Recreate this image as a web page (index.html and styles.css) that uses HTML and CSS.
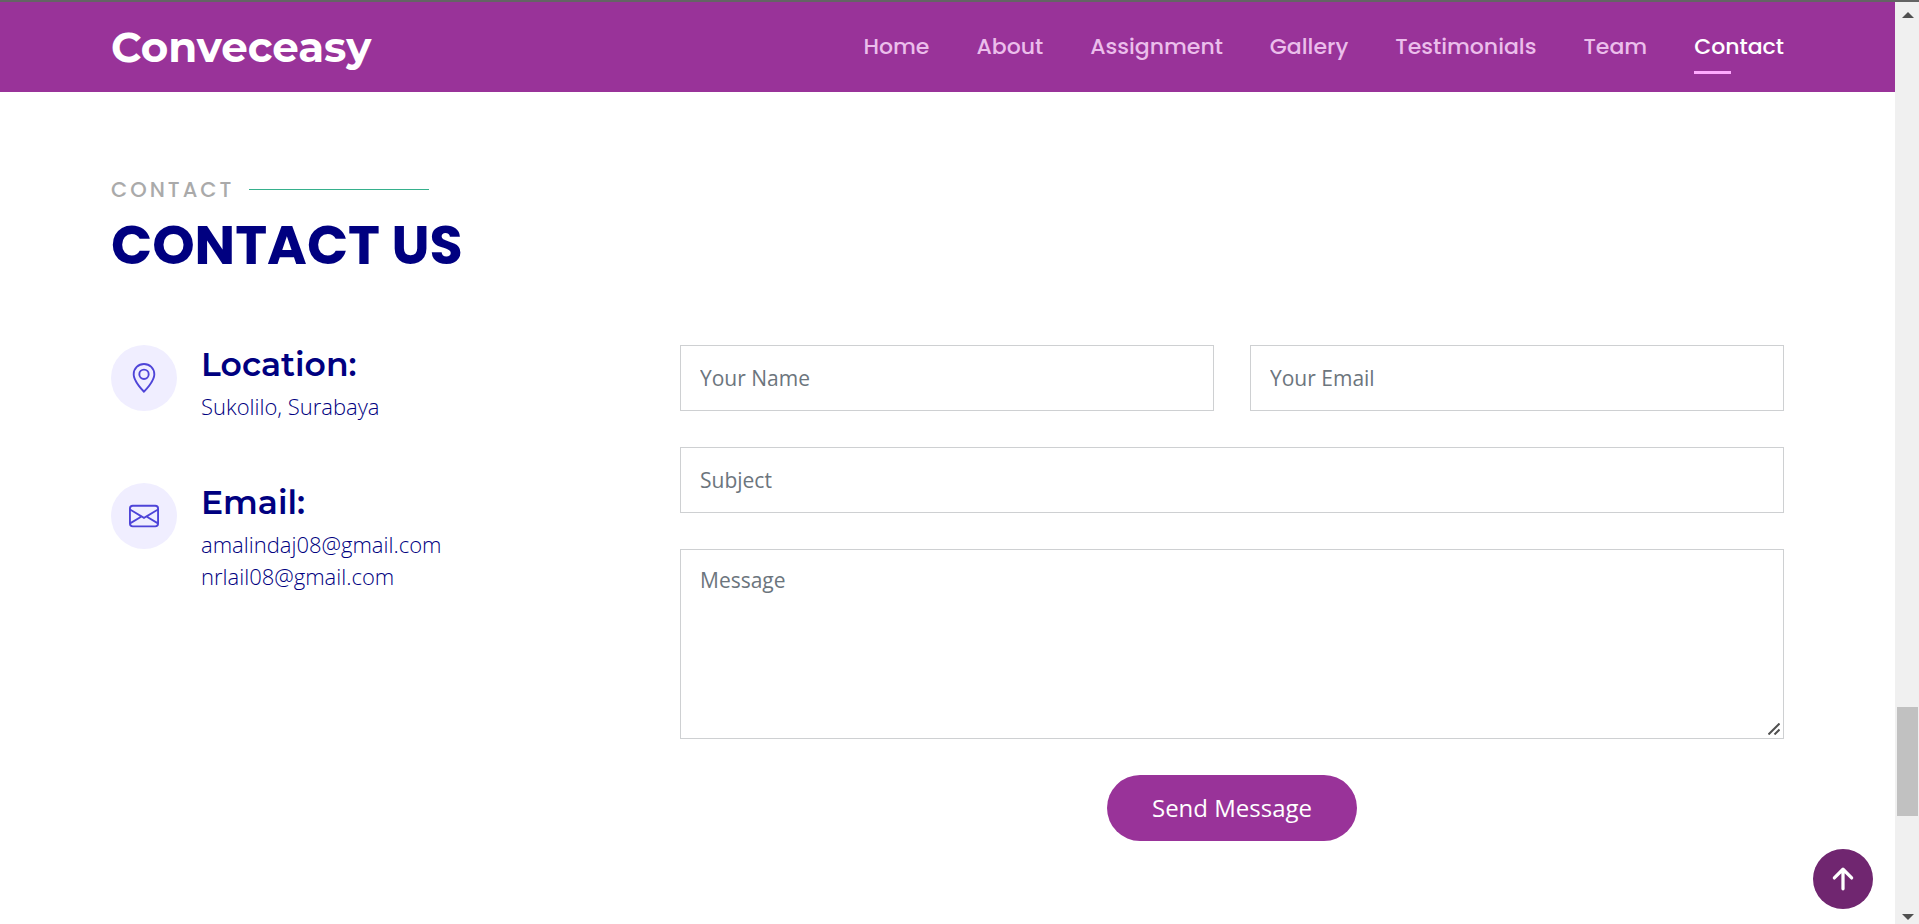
FILE: index.html
```html
<!DOCTYPE html>
<html lang="en">
<head>
<meta charset="utf-8">
<meta name="viewport" content="width=device-width, initial-scale=1">
<title>Conveceasy - Contact</title>
<link rel="stylesheet" href="styles.css">
</head>
<body>
<div class="page">
  <header class="header">
    <a class="logo" href="#">Conveceasy</a>
    <nav class="nav">
      <a href="#home">Home</a>
      <a href="#about">About</a>
      <a href="#assignment">Assignment</a>
      <a href="#gallery">Gallery</a>
      <a href="#testimonials">Testimonials</a>
      <a href="#team">Team</a>
      <a class="active" href="#contact">Contact</a>
    </nav>
  </header>
  <main class="contact" id="contact">
    <div class="section-title">
      <h2>Contact</h2>
      <p>Contact Us</p>
    </div>
    <div class="columns">
      <div class="info">
        <div class="info-item">
          <span class="info-icon">
            <svg viewBox="0 0 16 16" fill="currentColor" aria-hidden="true"><path d="M12.166 8.94c-.524 1.062-1.234 2.12-1.96 3.07A31.493 31.493 0 0 1 8 14.58a31.481 31.481 0 0 1-2.206-2.57c-.726-.95-1.436-2.008-1.96-3.07C3.304 7.867 3 6.862 3 6a5 5 0 0 1 10 0c0 .862-.305 1.867-.834 2.94zM8 16s6-5.686 6-10A6 6 0 0 0 2 6c0 4.314 6 10 6 10z"/><path d="M8 8a2 2 0 1 1 0-4 2 2 0 0 1 0 4zm0 1a3 3 0 1 0 0-6 3 3 0 0 0 0 6z"/></svg>
          </span>
          <div>
            <h4>Location:</h4>
            <p>Sukolilo, Surabaya</p>
          </div>
        </div>
        <div class="info-item">
          <span class="info-icon">
            <svg viewBox="0 0 16 16" fill="currentColor" aria-hidden="true"><path d="M0 4a2 2 0 0 1 2-2h12a2 2 0 0 1 2 2v8a2 2 0 0 1-2 2H2a2 2 0 0 1-2-2V4zm2-1a1 1 0 0 0-1 1v.217l7 4.2 7-4.2V4a1 1 0 0 0-1-1H2zm13 2.383-4.758 2.855L15 11.114v-5.73zm-.034 6.878L9.271 8.82 8 9.583 6.728 8.82l-5.694 3.44A1 1 0 0 0 2 13h12a1 1 0 0 0 .966-.739zM1 11.114l4.758-2.876L1 5.383v5.73z"/></svg>
          </span>
          <div>
            <h4>Email:</h4>
            <p>amalindaj08@gmail.com<br>nrlail08@gmail.com</p>
          </div>
        </div>
      </div>
      <form class="form">
        <input type="text" name="name" placeholder="Your Name" aria-label="Your Name">
        <input type="email" name="email" placeholder="Your Email" aria-label="Your Email">
        <input class="wide" type="text" name="subject" placeholder="Subject" aria-label="Subject">
        <div class="message wide">
          <textarea name="message" rows="5" placeholder="Message" aria-label="Message"></textarea>
          <svg class="grip" viewBox="0 0 12 12" fill="none" stroke="currentColor" aria-hidden="true"><path d="M0.5 11.5l11-11M6.500 11.500l5-5"/></svg>
        </div>
        <button class="wide" type="submit">Send Message</button>
      </form>
    </div>
  </main>
</div>
<a class="back-to-top" href="#" aria-label="Back to top">
  <svg viewBox="0 0 24 24" fill="none" stroke="currentColor" aria-hidden="true"><path d="M12 21V3M4 11l8-8 8 8"/></svg>
</a>
<div class="scrollbar" aria-hidden="true">
  <svg class="scroll-arrow" viewBox="0 0 12 6"><path d="M0 6l6-6 6 6z"/></svg>
  <div class="scroll-track"><div class="scroll-thumb"></div></div>
  <svg class="scroll-arrow" viewBox="0 0 12 6"><path d="M0 0l6 6 6-6z"/></svg>
</div>
</body>
</html>
```
FILE: styles.css
```css
* {
  box-sizing: border-box;
}

body {
  margin: 0;
  display: grid;
  grid-template-columns: 1fr 24px;
  height: 100vh;
  overflow: hidden;
  border-top: 2px solid #646464;
  background: #fff;
  color: #000080;
  font-family: "Open Sans", sans-serif;
}

h2, h4, p {
  margin: 0;
}

a {
  text-decoration: none;
}

.header {
  display: flex;
  align-items: center;
  justify-content: space-between;
  height: 90px;
  padding: 0 111px;
  background: #993399;
}

.logo {
  color: #fff;
  font: 700 42px/50px Montserrat, Inter, sans-serif;
}

.nav {
  display: flex;
  gap: 47px;
}

.nav a {
  position: relative;
  color: #ebbeeb;
  font: 500 22px/34px Poppins, Inter, sans-serif;
}

.nav .active {
  color: #fff;
}

.nav .active::after {
  content: "";
  position: absolute;
  left: 0;
  bottom: -10px;
  width: 37px;
  height: 3px;
  background: #ffaaff;
}

.contact {
  padding: 84px 111px 0;
}

.section-title {
  padding-bottom: 62px;
}

.section-title h2 {
  display: flex;
  align-items: center;
  gap: 15px;
  color: #aaa;
  font: 500 21px/27px Poppins, Inter, sans-serif;
  letter-spacing: 3px;
  text-transform: uppercase;
}

.section-title h2::after {
  content: "";
  width: 180px;
  height: 1px;
  background: #36b08c;
}

.section-title p {
  padding-top: 4px;
  font: 700 54px/76px Poppins, Inter, sans-serif;
  text-transform: uppercase;
}

.columns {
  display: grid;
  grid-template-columns: 1fr 2fr;
  gap: 17px;
}

.info {
  display: flex;
  flex-direction: column;
  gap: 61px;
}

.info-item {
  display: flex;
  gap: 24px;
}

.info-icon {
  display: grid;
  place-items: center;
  flex: none;
  width: 66px;
  height: 66px;
  border-radius: 50%;
  background: #f0eeff;
  color: #4e44d8;
}

.info-icon svg {
  width: 30px;
  height: 30px;
}

.info-item h4 {
  padding-bottom: 7px;
  font: 600 33px/38px Montserrat, Inter, sans-serif;
}

.info-item p {
  font-size: 22px;
  font-weight: 300;
  line-height: 32px;
}

.form {
  display: grid;
  grid-template-columns: 1fr 1fr;
  gap: 36px;
}

.form input,
.form textarea {
  width: 100%;
  margin: 0;
  padding: 14px 19px;
  border: 1px solid #ced0d2;
  border-radius: 0;
  background: #fff;
  color: #212529;
  font: 400 21px/32px "Open Sans", sans-serif;
}

.form input {
  height: 66px;
}

.form textarea {
  display: block;
  height: 190px;
  resize: none;
}

.form ::placeholder {
  color: #6c757d;
}

.form .wide {
  grid-column: span 2;
}

.message {
  position: relative;
}

.grip {
  position: absolute;
  right: 4px;
  bottom: 4px;
  width: 12px;
  height: 12px;
  color: #505050;
  stroke-width: 2;
}

.form button {
  justify-self: center;
  padding: 15px 45px;
  border: 0;
  border-radius: 50px;
  background: #993399;
  color: #fff;
  font: 400 24px/36px "Open Sans", sans-serif;
}

.back-to-top {
  position: fixed;
  right: 46px;
  bottom: 15px;
  display: grid;
  place-items: center;
  width: 60px;
  height: 60px;
  border-radius: 50%;
  background: #702670;
  color: #fff;
}

.back-to-top svg {
  width: 26px;
  height: 26px;
  stroke-width: 3;
  stroke-linecap: round;
  stroke-linejoin: round;
}

.scrollbar {
  display: flex;
  flex-direction: column;
  align-items: center;
  padding: 10px 1px 4px 2px;
  background: #f0f0f0;
}

.scroll-arrow {
  width: 12px;
  height: 6px;
  fill: #505050;
}

.scroll-track {
  flex: 1;
  display: flex;
  flex-direction: column;
  justify-content: flex-end;
  width: 100%;
  padding-bottom: 98px;
}

.scroll-thumb {
  height: 109px;
  background: #c1c1c1;
}
```
